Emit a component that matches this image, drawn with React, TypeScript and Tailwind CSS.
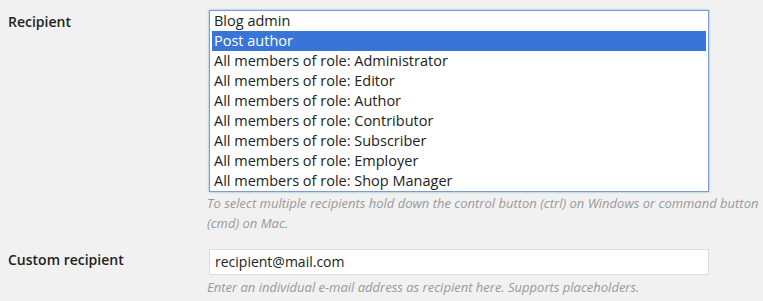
import React from "react";

const options = [
  "Blog admin",
  "Post author",
  "All members of role: Administrator",
  "All members of role: Editor",
  "All members of role: Author",
  "All members of role: Contributor",
  "All members of role: Subscriber",
  "All members of role: Employer",
  "All members of role: Shop Manager",
];

export default function App() {
  return (
    <div
      className="w-[763px] h-[301px] bg-[#f1f1f1] text-[#222] overflow-hidden"
      style={{ fontFamily: '"Open Sans", sans-serif' }}
    >
      <div className="flex pt-[10px]">
        <div className="w-[209px] pl-[8px] pt-[2px] text-[14px] font-semibold leading-[20px]">Recipient</div>
        <div className="w-[500px]">
          <div className="border border-[#7e9bcb] shadow-[0_0_2px_rgba(30,140,190,0.6)] bg-white py-0 px-[2px] h-[182px]">
            {options.map((o, i) => (
              <div
                key={o}
                className={
                  "h-[20px] leading-[20px] text-[14.5px] pl-[2px] " +
                  (i === 1 ? "bg-[#3875d7] text-white" : "text-[#222]")
                }
              >
                {o}
              </div>
            ))}
          </div>
          <p className="mt-[1px] -ml-[2px] text-[13px] leading-[20px] italic text-[#999] w-[560px]">
            To select multiple recipients hold down the control button (ctrl) on Windows or command button (cmd) on Mac.
          </p>
        </div>
      </div>
      <div className="flex mt-[16px]">
        <div className="w-[209px] pl-[8px] pt-[1px] text-[14px] font-semibold leading-[20px]">Custom recipient</div>
        <div className="w-[500px]">
          <div className="h-[26px] border border-[#ddd] bg-white pl-[5px] text-[14px] leading-[24px] text-[#222]">
            recipient@mail.com
          </div>
          <p className="mt-[2px] -ml-[2px] text-[13px] leading-[20px] italic text-[#999]">
            Enter an individual e-mail address as recipient here. Supports placeholders.
          </p>
        </div>
      </div>
    </div>
  );
}
